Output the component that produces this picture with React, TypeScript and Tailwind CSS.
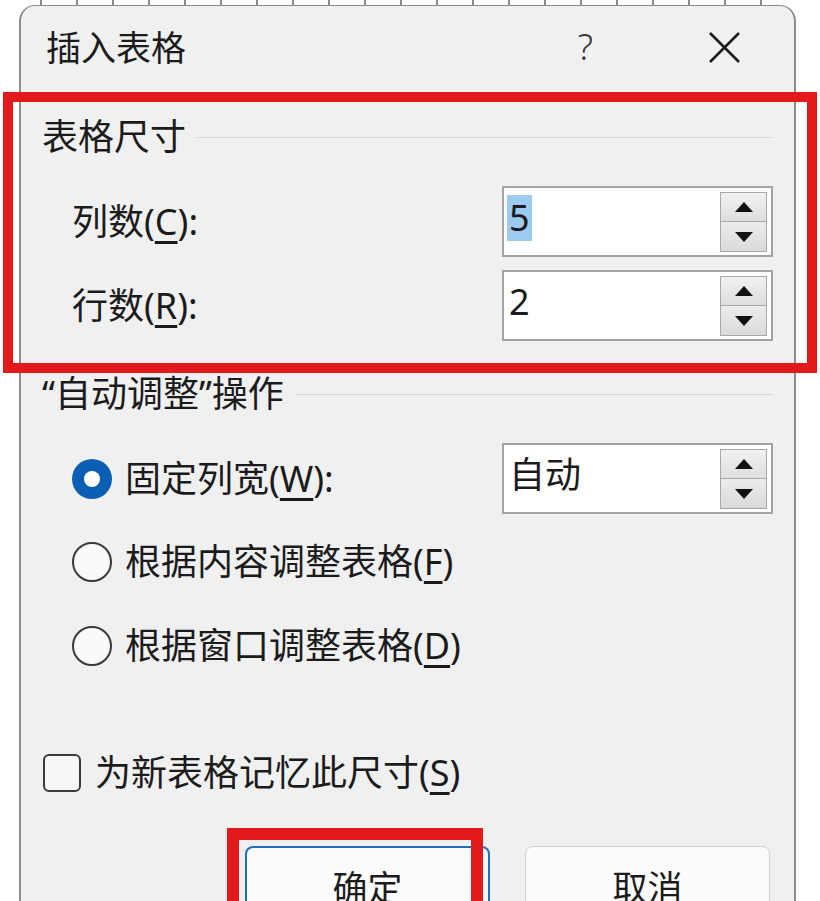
import React from 'react';

const Spin = ({ value, selected }: { value: string; selected?: boolean }) => (
  <div className="ml-auto flex h-[71px] w-[271px] shrink-0 items-start border-2 border-[#a3a3a3] bg-white pl-[3px] pr-[4px] pt-[4px]">
    <div className="flex h-[52px] flex-1 items-center">
      <span
        className={`px-[2px] text-[36px] leading-[46px] ${selected ? 'bg-[#9ccaf0]' : ''}`}
      >
        {value}
      </span>
    </div>
    <div className="flex w-[47px] flex-col">
      <button className="flex h-[30px] items-center justify-center border border-[#a8a8a8] bg-gradient-to-b from-[#f1f1f1] to-[#dedede]">
        <svg width="18" height="10" viewBox="0 0 18 10">
          <path d="M9 0 L18 10 L0 10 Z" fill="#111" />
        </svg>
      </button>
      <button className="flex h-[30px] items-center justify-center border border-t-0 border-[#a8a8a8] bg-gradient-to-b from-[#ececec] to-[#dadada]">
        <svg width="18" height="10" viewBox="0 0 18 10">
          <path d="M0 0 L18 0 L9 10 Z" fill="#111" />
        </svg>
      </button>
    </div>
  </div>
);

const Radio = ({ label, u }: { label: string; u: string }) => (
  <div className="flex h-[84px] items-center gap-[13px] pl-[51px]">
    <div className="h-[40px] w-[40px] rounded-full border-2 border-[#3a3a3a] bg-[#fafafa]" />
    <span>
      {label}(<u className="underline-offset-[6px]">{u}</u>)
    </span>
  </div>
);

export default function App() {
  return (
    <div
      className="relative h-[901px] w-[820px] overflow-hidden bg-white text-[36px] leading-none text-[#1b1b1b]"
      style={{ fontFamily: '"Noto Sans", "Noto Sans CJK SC", sans-serif' }}
    >
      {/* grid marks of the document behind */}
      <div className="ml-[40px] mr-[30px] h-[5px] bg-[repeating-linear-gradient(90deg,#8a8a8a_0_2px,transparent_2px_36px)]" />

      <div className="ml-[19px] w-[777px] rounded-t-[16px] border-x-2 border-t border-[#8c8c8c] bg-[#f0f0f1] pb-[40px]">
        {/* Title bar */}
        <div className="flex h-[82px] items-center pl-[25px] pr-[54px]">
          <span className="text-[35px]">插入表格</span>
          <span className="ml-auto mr-[116px] font-light text-[36px] text-[#333]">?</span>
          <svg width="31" height="31" viewBox="0 0 31 31">
            <path d="M1 1 L30 30 M30 1 L1 30" stroke="#1b1b1b" strokeWidth="2.6" />
          </svg>
        </div>

        <div className="flex h-[98px] items-center pl-[21px] pr-[21px]">
          <span>表格尺寸</span>
          <div className="ml-auto h-px w-[576px] bg-[#d6d6d6]" />
        </div>

        <div className="flex items-center pl-[51px] pr-[21px]">
          <span>
            列数(<u className="underline-offset-[6px]">C</u>):
          </span>
          <Spin value="5" selected />
        </div>
        <div className="mt-[13px] flex items-center pl-[51px] pr-[21px]">
          <span>
            行数(<u className="underline-offset-[6px]">R</u>):
          </span>
          <Spin value="2" />
        </div>

        <div className="flex h-[102px] items-center pl-[21px] pr-[21px] pt-[4px]">
          <span>“自动调整”操作</span>
          <div className="ml-auto h-px w-[478px] bg-[#d6d6d6]" />
        </div>

        <div className="flex items-center gap-[13px] pl-[51px] pr-[21px]">
          <div className="flex h-[40px] w-[40px] items-center justify-center rounded-full bg-[#0a5fb4]">
            <div className="h-[16px] w-[16px] rounded-full bg-white" />
          </div>
          <span>
            固定列宽(<u className="underline-offset-[6px]">W</u>):
          </span>
          <Spin value="自动" />
        </div>

        <div className="mt-[6px]">
          <Radio label="根据内容调整表格" u="F" />
          <Radio label="根据窗口调整表格" u="D" />
        </div>

        <div className="mt-[65px] flex h-[40px] items-center gap-[14px] pl-[22px]">
          <div className="h-[38px] w-[38px] rounded-[6px] border-2 border-[#3a3a3a] bg-[#f7f7f7]" />
          <span>
            为新表格记忆此尺寸(<u className="underline-offset-[6px]">S</u>)
          </span>
        </div>

        <div className="mt-[53px] flex justify-end gap-[35px] pr-[24px]">
          <button className="h-[72px] w-[245px] rounded-[8px] border-2 border-[#1f6fc0] bg-[#fbfbfb] pt-[10px] text-[35px]">
            确定
          </button>
          <button className="h-[72px] w-[245px] rounded-[8px] border border-[#cfcfcf] bg-[#fbfbfb] pt-[10px] text-[35px]">
            取消
          </button>
        </div>
      </div>

      {/* red annotation frames */}
      <div className="absolute left-[3px] top-[92px] h-[281px] w-[814px] border-[10px] border-[#e31a1c]" />
      <div className="absolute left-[227px] top-[828px] h-[100px] w-[256px] border-[12px] border-[#e31a1c]" />
    </div>
  );
}
